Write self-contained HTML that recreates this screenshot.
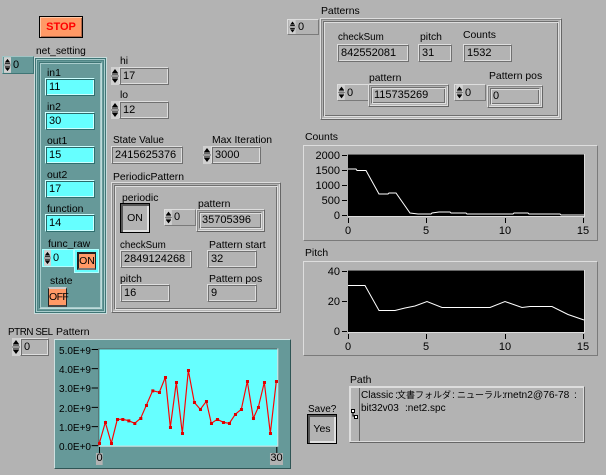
<!DOCTYPE html>
<html><head><meta charset="utf-8"><style>
html,body{margin:0;padding:0;width:606px;height:475px;overflow:hidden;background:#b3b3b3}
body{position:relative;font:10.4px/13px "Liberation Sans","Noto Sans CJK JP",sans-serif;color:#000}
div,svg{position:absolute;box-sizing:border-box}
.t{white-space:nowrap;margin-top:1px}
.n{font-size:11px;white-space:nowrap}
.f{border:1px solid;border-color:#dedede #707070 #707070 #dedede;box-shadow:inset 1px 1px 0 #707070,inset -1px -1px 0 #dedede;padding-left:3px;line-height:16px;font-size:11px;white-space:nowrap}
.c{border:1px solid;border-color:#ccffff #2f6f6f #2f6f6f #ccffff;background:#66ffff;box-shadow:inset 1px 1px 0 #2a6a6a,inset -1px -1px 0 #ccffff;padding-left:3px;font-size:11px;line-height:16px}
.d{border:1px solid;border-color:#dedede #666 #666 #dedede;box-shadow:inset 1px 1px 0 #888,inset -1px -1px 0 #dedede;padding:2px}
.d>div{position:relative;width:100%;height:100%;border:1px solid;border-color:#707070 #e0e0e0 #e0e0e0 #707070;box-shadow:inset 1px 1px 0 #dedede,inset -1px -1px 0 #707070;padding-left:2px;font-size:11px;line-height:15px}
.s{border:1px solid;border-color:#dedede #7a7a7a #7a7a7a #dedede}
</style></head><body>
<svg width="0" height="0" style="left:0;top:0"><defs>
<symbol id="sp" viewBox="0 0 8 18"><rect width="8" height="18" fill="#d0d0d0"/><rect x="0" y="8.500" width="8" height="1" fill="#666"/><path d="M4 2L1 6H7Z M1 6.500H7V7.500H1Z M1 10.500H7V11.500H1Z M1 12H7L4 16Z" fill="#000"/></symbol>
</defs></svg>

<!-- STOP -->
<div style="left:39px;top:16px;width:44px;height:22px;background:#ff9966;border:1px solid #000;box-shadow:inset 1px 1px 0 #ffc9a8,inset -1px -1px 0 #b0684a;color:#f00;font:bold 11px/20px 'Liberation Sans',sans-serif;text-align:center">STOP</div>

<!-- net_setting -->
<div class="t" style="left:36px;top:44px;font-size:10.200px">net_setting</div>
<div style="left:2px;top:56px;width:32px;height:18px;background:#669999;border:1px solid;border-color:#a0c4c4 #3f7575 #3f7575 #a0c4c4"></div>
<svg style="left:4px;top:57px" width="7" height="16"><use href="#sp" width="7" height="16" preserveAspectRatio="none"/></svg>
<div class="n" style="left:13px;top:59px">0</div>

<div style="left:34px;top:57px;width:73px;height:257px;background:#669999;border:1px solid #c8dcdc;box-shadow:inset 0 0 0 1px #3f7575,inset 0 0 0 2px #a8cccc,inset 0 0 0 3px #4f8585"></div>
<div style="left:39px;top:62px;width:63px;height:247px;border:1px solid;border-color:#3f7575 #c0dcdc #c0dcdc #3f7575;box-shadow:inset 0 0 0 1px #a8cccc"></div>

<div class="t" style="left:47px;top:66px">in1</div>
<div class="c" style="left:45px;top:78px;width:50px;height:18px">11</div>
<div class="t" style="left:47px;top:100px">in2</div>
<div class="c" style="left:45px;top:112px;width:50px;height:18px">30</div>
<div class="t" style="left:47px;top:134px">out1</div>
<div class="c" style="left:45px;top:146px;width:50px;height:18px">15</div>
<div class="t" style="left:47px;top:168px">out2</div>
<div class="c" style="left:45px;top:180px;width:50px;height:18px">17</div>
<div class="t" style="left:47px;top:202px">function</div>
<div class="c" style="left:45px;top:214px;width:50px;height:18px">14</div>
<div class="t" style="left:48px;top:237px">func_raw</div>
<div style="left:42px;top:249px;width:32px;height:18px;background:#66ffff;border:1px solid #b0ffff"></div>
<svg style="left:44px;top:250px" width="7" height="16"><use href="#sp" width="7" height="16" preserveAspectRatio="none"/></svg>
<div class="n" style="left:53px;top:252px">0</div>
<div style="left:74px;top:249px;width:25px;height:24px;background:#66ffff;border:1px solid #b0ffff"></div>
<div style="left:77px;top:252px;width:19px;height:18px;background:#ff9966;border:1px solid #222;border-top-width:2px;border-left-width:2px;border-bottom:2px solid #777;font-size:10.500px;line-height:14px;text-align:center">ON</div>
<div class="t" style="left:50px;top:274px">state</div>
<div style="left:48px;top:287px;width:19px;height:20px;background:#ff9966;border:1px solid #222;border-top:2px solid #ccc;border-bottom:2px solid #444;font-size:10.500px;line-height:16px;text-align:center;letter-spacing:-.6px">OFF</div>

<!-- hi lo -->
<div class="t" style="left:120px;top:54px">hi</div>
<svg style="left:111px;top:67px" width="8" height="18"><use href="#sp"/></svg>
<div class="f" style="left:119px;top:67px;width:50px;height:18px">17</div>
<div class="t" style="left:120px;top:88px">lo</div>
<svg style="left:111px;top:101px" width="8" height="18"><use href="#sp"/></svg>
<div class="f" style="left:119px;top:101px;width:50px;height:18px">12</div>

<!-- State / Max -->
<div class="t" style="left:113px;top:133px;font-size:10px">State Value</div>
<div class="f" style="left:111px;top:146px;width:72px;height:18px">2415625376</div>
<div class="t" style="left:212px;top:133px">Max Iteration</div>
<svg style="left:203px;top:146px" width="8" height="18"><use href="#sp"/></svg>
<div class="f" style="left:211px;top:146px;width:50px;height:18px">3000</div>

<!-- PeriodicPattern -->
<div class="t" style="left:113px;top:170px">PeriodicPattern</div>
<div class="d" style="left:111px;top:182px;width:170px;height:131px"><div></div></div>
<div class="t" style="left:122px;top:191px">periodic</div>
<div style="left:120px;top:203px;width:30px;height:30px;background:#b3b3b3;border:1px solid #000;box-shadow:inset 2px 2px 0 #555,inset -2px -2px 0 #e0e0e0;text-align:center;font-size:10.500px;line-height:28px">ON</div>
<div class="s" style="left:164px;top:209px;width:32px;height:17px"></div>
<svg style="left:165px;top:210px" width="7" height="15"><use href="#sp" width="7" height="15" preserveAspectRatio="none"/></svg>
<div class="n" style="left:174px;top:211px">0</div>
<div class="t" style="left:198px;top:197px">pattern</div>
<div class="d" style="left:196px;top:209px;width:69px;height:23px"><div>35705396</div></div>
<div class="t" style="left:120px;top:238px;font-size:9.800px">checkSum</div>
<div class="f" style="left:120px;top:250px;width:72px;height:18px">2849124268</div>
<div class="t" style="left:209px;top:238px">Pattern start</div>
<div class="f" style="left:207px;top:250px;width:50px;height:18px">32</div>
<div class="t" style="left:120px;top:272px">pitch</div>
<div class="f" style="left:120px;top:284px;width:50px;height:18px">16</div>
<div class="t" style="left:209px;top:272px">Pattern pos</div>
<div class="f" style="left:207px;top:284px;width:50px;height:18px">9</div>

<!-- Patterns -->
<div class="t" style="left:321px;top:3px;margin-top:2px">Patterns</div>
<div class="s" style="left:287px;top:19px;width:32px;height:16px"></div>
<svg style="left:289px;top:20px" width="7" height="14"><use href="#sp" width="7" height="14" preserveAspectRatio="none"/></svg>
<div class="n" style="left:298px;top:21px">0</div>
<div class="d" style="left:320px;top:18px;width:242px;height:102px"><div></div></div>
<div class="t" style="left:338px;top:30px;font-size:9.800px">checkSum</div>
<div class="f" style="left:337px;top:44px;width:72px;height:18px">842552081</div>
<div class="t" style="left:420px;top:30px">pitch</div>
<div class="f" style="left:418px;top:44px;width:34px;height:18px">31</div>
<div class="t" style="left:463px;top:28px">Counts</div>
<div class="f" style="left:463px;top:44px;width:49px;height:18px">1532</div>
<div class="s" style="left:337px;top:84px;width:32px;height:17px"></div>
<svg style="left:338px;top:85px" width="7" height="15"><use href="#sp" width="7" height="15" preserveAspectRatio="none"/></svg>
<div class="n" style="left:347px;top:87px">0</div>
<div class="t" style="left:369px;top:71px">pattern</div>
<div class="d" style="left:368px;top:84px;width:81px;height:23px"><div>115735269</div></div>
<div class="s" style="left:454px;top:84px;width:32px;height:17px"></div>
<svg style="left:456px;top:85px" width="7" height="15"><use href="#sp" width="7" height="15" preserveAspectRatio="none"/></svg>
<div class="n" style="left:465px;top:87px">0</div>
<div class="t" style="left:489px;top:69px">Pattern pos</div>
<div class="d" style="left:487px;top:85px;width:56px;height:23px"><div>0</div></div>

<!-- Counts -->
<div class="t" style="left:305px;top:130px">Counts</div>
<div class="s" style="left:303px;top:145px;width:295px;height:96px"></div>
<svg style="left:303px;top:145px" width="295" height="96" font-family="Liberation Sans" font-size="11">
<rect x="45" y="9" width="236" height="62" fill="#000"/>
<path d="M45 71.500H281.500V9" fill="none" stroke="#ddd"/>
<path d="M45 9.500H281" fill="none" stroke="#666"/>
<polyline transform="translate(-303,-145)" fill="none" stroke="#fff" points="348,169 356,169 357,170.500 366,170.500 379,194 388,194 389,193 396,193 410,213 418,214 431,214 432,213 439,212 450,212 451,213 466,213 467,214 513,214 514,213 528,213 529,214 560,214 561,215 584,215"/>
<path d="M39 10.500H44M39 25.500H44M39 40.500H44M39 55.500H44M39 70.500H44M45.500 73V78M123.500 73V78M202.500 73V78M280.500 73V78" stroke="#000" fill="none"/>
<g text-anchor="end"><text x="37" y="14">2000</text><text x="37" y="29">1500</text><text x="37" y="44">1000</text><text x="37" y="59">500</text><text x="37" y="74">0</text></g>
<g text-anchor="middle"><text x="45" y="89">0</text><text x="123" y="89">5</text><text x="202" y="89">10</text><text x="280" y="89">15</text></g>
</svg>

<!-- Pitch -->
<div class="t" style="left:305px;top:246px">Pitch</div>
<div class="s" style="left:303px;top:261px;width:295px;height:95px"></div>
<svg style="left:303px;top:261px" width="295" height="95" font-family="Liberation Sans" font-size="11">
<rect x="45" y="9" width="236" height="62" fill="#000"/>
<path d="M45 71.500H281.500V9" fill="none" stroke="#ddd"/>
<path d="M45 9.500H281" fill="none" stroke="#666"/>
<polyline transform="translate(-303,-261)" fill="none" stroke="#fff" points="348,285.500 365,285.500 379,310.500 395,310.500 405,308 415,306 427,301.500 442,307.500 490,307.500 505,301.500 522,307.500 530,306.500 552,306.500 568,314.500 584,320"/>
<path d="M39 10.500H44M39 40.500H44M39 70.500H44M45.500 73V78M123.500 73V78M202.500 73V78M280.500 73V78" stroke="#000" fill="none"/>
<g text-anchor="end"><text x="37" y="14">40</text><text x="37" y="44">20</text><text x="37" y="74">0</text></g>
<g text-anchor="middle"><text x="45" y="89">0</text><text x="123" y="89">5</text><text x="202" y="89">10</text><text x="280" y="89">15</text></g>
</svg>

<!-- PTRN SEL -->
<div class="t" style="left:8px;top:325px;font-size:9.800px;letter-spacing:-.4px">PTRN SEL</div>
<svg style="left:12px;top:338px" width="8" height="18"><use href="#sp"/></svg>
<div class="f" style="left:20px;top:338px;width:29px;height:18px">0</div>

<!-- Pattern graph -->
<div class="t" style="left:56px;top:325px">Pattern</div>
<div style="left:54px;top:339px;width:237px;height:130px;background:#669999;border:1px solid;border-color:#cfe0e0 #2f5555 #2f5555 #cfe0e0"></div>
<svg style="left:0;top:315px" width="300" height="160" font-family="Liberation Sans" font-size="10">
<g transform="scale(.3333)">
<rect x="295" y="100" width="538" height="295" fill="#66ffff"/>
<path d="M295 101.500H833" stroke="#555" stroke-width="3" fill="none"/>
<path d="M295 393.500H833.500V100" stroke="#ddd" stroke-width="3" fill="none"/>
<path d="M296.500 100V394" stroke="#555" stroke-width="3" fill="none"/>
<polyline fill="none" stroke="#f00" stroke-width="3.500" points="298,385 316,322 334,385 352,313 368,313 386,317 404,325 422,310 439,271 458,227 478,232 496,187 511,337 529,202 547,355 565,166 583,262 601,283 619,259 634,325 652,313 670,322 688,325 706,298 724,283 742,199 760,310 775,277 793,202 811,355 829,199"/>
<path fill="#e00000" d="M294 381h9v9h-9zM312 318h9v9h-9zM330 381h9v9h-9zM348 309h9v9h-9zM364 309h9v9h-9zM382 313h9v9h-9zM400 321h9v9h-9zM418 306h9v9h-9zM435 267h9v9h-9zM454 223h9v9h-9zM474 228h9v9h-9zM492 183h9v9h-9zM507 333h9v9h-9zM525 198h9v9h-9zM543 351h9v9h-9zM561 162h9v9h-9zM579 258h9v9h-9zM597 279h9v9h-9zM615 255h9v9h-9zM630 321h9v9h-9zM648 309h9v9h-9zM666 318h9v9h-9zM684 321h9v9h-9zM702 294h9v9h-9zM720 279h9v9h-9zM738 195h9v9h-9zM756 306h9v9h-9zM771 273h9v9h-9zM789 198h9v9h-9zM807 351h9v9h-9zM825 195h9v9h-9z"/>
<path d="M275 103.500H294M275 161H294M275 219H294M275 277H294M275 335H294M275 392H294M298.500 396V414M830.500 396V414" stroke="#000" stroke-width="3" fill="none"/>
<rect x="288" y="414" width="20" height="36" fill="#b3b3b3"/>
<rect x="810" y="414" width="39" height="36" fill="#b3b3b3"/>
</g>
<g text-anchor="end"><text x="91" y="39">5.0E+9</text><text x="91" y="58">4.0E+9</text><text x="91" y="77">3.0E+9</text><text x="91" y="97">2.0E+9</text><text x="91" y="116">1.0E+9</text><text x="91" y="135">0.0E+0</text></g>
</svg>
<div class="n" style="left:96px;top:452px;width:7px;text-align:center;line-height:13px">0</div>
<div class="n" style="left:270px;top:452px;width:13px;text-align:center;line-height:13px">30</div>

<!-- Save -->
<div class="t" style="left:308px;top:402px;font-size:10px">Save?</div>
<div style="left:307px;top:414px;width:30px;height:30px;background:#b3b3b3;border:1px solid #000;box-shadow:inset 2px 2px 0 #555,inset -2px -2px 0 #e0e0e0;text-align:center;font-size:10.500px;line-height:28px">Yes</div>

<!-- Path -->
<div class="t" style="left:350px;top:373px">Path</div>
<div style="left:349px;top:386px;width:236px;height:57px;border:1px solid;border-color:#ddd #666 #666 #ddd"></div>
<div style="left:350px;top:387px;width:234px;height:55px;border:1px solid #ddd"></div>
<div style="left:359px;top:388px;width:224px;height:53px;border-left:1px solid #666"></div>
<svg style="left:351px;top:409px" width="7" height="11"><rect x=".5" y=".5" width="3" height="3" fill="#fff" stroke="#000"/><rect x="3.500" y="6.500" width="3" height="3" fill="#fff" stroke="#000"/><path d="M2 4V7H3" stroke="#000" fill="none"/></svg>
<div class="t" style="left:361px;top:389px;font-size:10px;margin:0">Classic</div>
<div class="t" style="left:395px;top:389px;margin:0">:</div>
<div class="t" style="left:397px;top:389px;font-size:9px;margin:0">文書フォルダ</div>
<div class="t" style="left:452px;top:389px;margin:0">:</div>
<div class="t" style="left:457px;top:389px;font-size:9px;margin:0">ニューラル</div>
<div class="t" style="left:502px;top:389px;margin:0">:</div>
<div class="t" style="left:504px;top:389px;font-size:10.200px;margin:0">rnetn2@76-78</div>
<div class="t" style="left:574px;top:389px;margin:0">:</div>
<div class="t" style="left:361px;top:402px;font-size:10px;margin:0">bit32v03</div>
<div class="t" style="left:405px;top:402px;font-size:10px;margin:0">:net2.spc</div>
</body></html>
